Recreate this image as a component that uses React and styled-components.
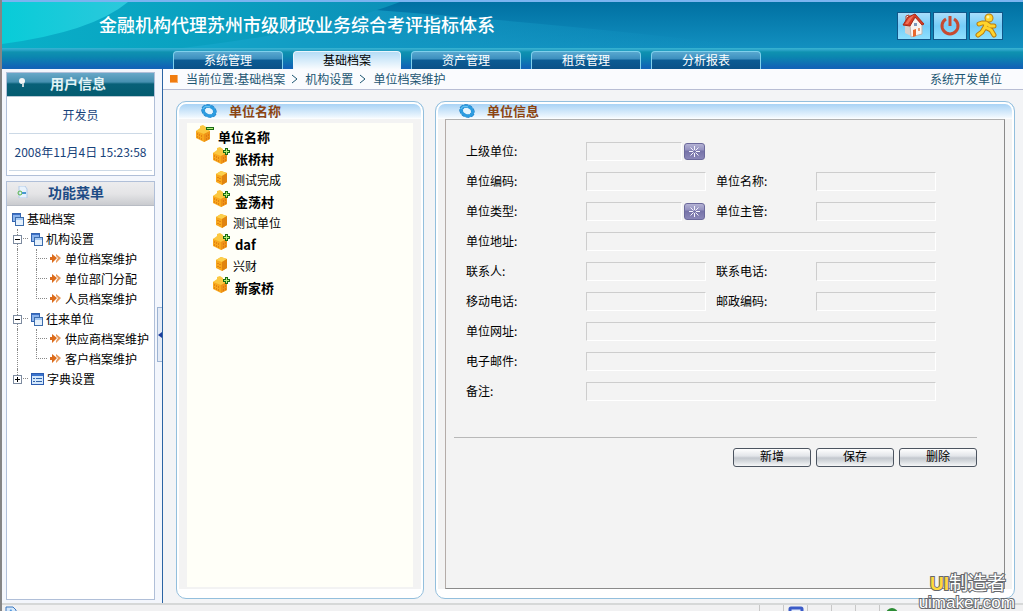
import React, { useState } from "react";
import styled, { createGlobalStyle } from "styled-components";

const GlobalStyle = createGlobalStyle`
    * {
        box-sizing: border-box;
    }

    body {
        margin: 0;
        font-family: "Noto Sans CJK SC", sans-serif;
        font-size: 12px;
        line-height: 20px;
        color: #000;
    }

    a {
        color: inherit;
        text-decoration: none;
    }

    button, input {
        font: inherit;
        color: inherit;
        margin: 0;
        padding: 0;
    }
`;

const Page = styled.div`
    position: relative;
    display: flex;
    flex-direction: column;
    min-height: 100vh;
    overflow: hidden;
    border-left: 2px solid #858585;
    background: #f3f4f6;
`;

/* ---- top ---- */

const Header = styled.header`
    position: relative;
    display: flex;
    align-items: center;
    justify-content: space-between;
    height: 48px;
    padding: 3px 20px 0 97px;
    border-top: 2px solid #7ab4f0;
    background: linear-gradient(#0070a2, #1290c0);
`;

const Swoosh = styled.svg`
    position: absolute;
    left: 0;
    top: 0;
    width: 760px;
    height: 46px;
`;

const Title = styled.h1`
    position: relative;
    margin: 0;
    font-size: 18px;
    line-height: 24px;
    font-weight: 500;
    color: #fff;
    padding-bottom: 6px;
`;

const Tools = styled.div`
    position: relative;
    display: flex;
    gap: 2px;
    padding-bottom: 2px;
`;

const ToolButton = styled.button`
    display: flex;
    align-items: center;
    justify-content: center;
    width: 34px;
    height: 28px;
    border: 1px solid #12578a;
    background: linear-gradient(#a8ddfb, #74cdf8 50%, #8fe0ff);
`;

const TabBar = styled.nav`
    display: flex;
    gap: 10px;
    height: 21px;
    padding: 3px 0 0 171px;
    background: linear-gradient(#38b4d2, #2aa4c8 2px, #0f92b0 4px, #0b86b0 9px, #1164b6 19px, #1164b6);
`;

const Tab = styled.a`
    width: ${props => props.$active ? "108px" : "110px"};
    height: 18px;
    border: 1px solid ${props => props.$active ? "#e9f5fd" : "#7fd0ec"};
    border-bottom: none;
    border-radius: 4px 4px 0 0;
    text-align: center;
    line-height: 15px;
    color: ${props => props.$active ? "#000" : "#fff"};
    background: ${props => props.$active
        ? "linear-gradient(#b4dcf6, #f8fbfe)"
        : "linear-gradient(#58a8d0, #3c8fbe 7px, #0c5c94 8px, #0b5288)"};
`;

/* ---- sidebar ---- */

const Body = styled.div`
    display: flex;
    flex: 1;
`;

const Sidebar = styled.aside`
    position: relative;
    display: flex;
    flex-direction: column;
    gap: 5px;
    width: 161px;
    padding: 3px 7px 3px 4px;
    border-right: 1px solid #2b64a4;
    background: #f3f6fc;
`;

const SideBox = styled.section`
    flex: ${props => props.$grow ? "1" : "none"};
    border: 1px solid #b0bfd8;
    background: #fff;
`;

const SideHead = styled.h2`
    display: flex;
    align-items: center;
    gap: ${props => props.$teal ? "22px" : "20px"};
    margin: 0;
    height: 24px;
    padding: 0 0 3px 10px;
    font-size: 14px;
    line-height: 20px;
    color: ${props => props.$teal ? "#e3f3f6" : "#1d4b85"};
    border-bottom: 1px solid ${props => props.$teal ? "#b8c8d4" : "#b8bcc4"};
    background: ${props => props.$teal
        ? "linear-gradient(#68a8c8, #4690b0 9px, #086078 11px, #045c70)"
        : "linear-gradient(#ececee, #e4e4e6 12px, #c9cbcf)"};
`;

const UserLine = styled.p`
    margin: 0 2px;
    padding: 8px 0;
    text-align: center;
    white-space: nowrap;
    color: #17427a;
    border-bottom: 1px solid #ccd9e6;
`;

const UserInfo = styled.div`
    padding-bottom: 4px;
`;

const Tree = styled.ul`
    list-style: none;
    margin: 0;
    padding: 3px 0 0 5px;
`;

const Branch = styled.div`
    display: flex;
    align-items: center;
    height: 20px;
    white-space: nowrap;
`;

/* one indent step, with the dotted guide lines of the tree */
const Guide = styled.span`
    position: relative;
    flex: none;
    align-self: stretch;
    display: flex;
    align-items: center;
    width: 19px;

    &::before {
        content: "";
        position: absolute;
        left: 5px;
        top: 0;
        height: ${props => props.$last ? "50%" : "100%"};
        border-left: 1px dotted #888;
    }

    &::after {
        content: "";
        position: absolute;
        left: 5px;
        right: 3px;
        top: 9px;
        border-top: ${props => props.$arm ? "1px dotted #888" : "none"};
    }
`;

const Toggle = styled.button`
    position: relative;
    z-index: 1;
    display: flex;
    width: 9px;
    height: 9px;
    margin-left: 1px;
    border: 1px solid #7d8ba0;
    background: #fff;
`;

const BranchLink = styled.a`
    display: flex;
    align-items: center;
    gap: ${props => props.$leaf ? "4px" : "3px"};
`;

const Handle = styled.button`
    position: absolute;
    right: 0;
    top: 238px;
    display: flex;
    align-items: center;
    width: 5px;
    height: 55px;
    border: 1px solid #9db3d2;
    border-right: none;
    background: #e4ebf6;
`;

/* ---- content ---- */

const Content = styled.div`
    display: flex;
    flex-direction: column;
    flex: 1;
    min-width: 0;
`;

const Crumbs = styled.div`
    display: flex;
    align-items: center;
    height: 21px;
    padding: 0 21px 0 7px;
    border-bottom: 1px solid #b8bdd4;
    background: #fafbfe;
    color: #1d5672;
`;

const Square = styled.span`
    width: 8px;
    height: 8px;
    margin-right: 8px;
    background: #f07c10;
    border-right: 1px solid #f8b070;
    border-bottom: 1px solid #f8b070;
`;

const Arrow = styled.span`
    display: flex;
    margin: 0 7px 0 6px;
`;

const Owner = styled.a`
    margin-left: auto;
`;

const Panels = styled.main`
    display: flex;
    flex: 1;
    gap: 11px;
    padding: 11px 8px 4px 13px;
`;

const Panel = styled.section`
    display: flex;
    flex-direction: column;
    flex: ${props => props.$narrow ? "none" : "1"};
    width: ${props => props.$narrow ? "248px" : "auto"};
    padding: 0 ${props => props.$narrow ? "10px" : "9px"} 9px;
    border: 1px solid #93bfdd;
    border-radius: 10px;
    box-shadow: inset 0 0 0 2px #fff;
    background:
        linear-gradient(#fff, #fff) bottom / 100% 9px no-repeat,
        linear-gradient(#fff, #fff 2px, #a9d3f5 2px, #eef7fe 15px, #fff 17px) top / 100% 17px no-repeat,
        #f3f3f3;
`;

const PanelHead = styled.h2`
    display: flex;
    align-items: center;
    gap: 11px;
    height: 17px;
    margin: 0;
    padding-left: 13px;
    font-size: 13px;
    line-height: 17px;
    color: #8c4512;
`;

const UnitTree = styled.ul`
    flex: 1;
    list-style: none;
    margin: 4px 0 2px;
    padding: 0 0 0 8px;
    background: #fffff8;
`;

const Unit = styled.li`
    display: flex;
    align-items: center;
    gap: ${props => props.$leaf ? "5px" : "4px"};
    height: ${props => props.$leaf ? "21px" : "22px"};
    padding-left: ${props => props.$root ? "0" : props.$leaf ? "20px" : "17px"};
    font-size: ${props => props.$leaf ? "12px" : "13px"};
    font-weight: ${props => props.$leaf ? "400" : "700"};

    a {
        padding-top: 5px;
    }
`;

const Frame = styled.form`
    flex: 1;
    padding: 16px 27px 0 8px;
    border: 1px solid #8a8a8a;
    border-top-color: #b0b0b0;
    border-left-color: #b4aca8;
    background: #f3f3f3;
`;

const Fields = styled.div`
    display: grid;
    grid-template-columns: 120px 120px 110px 120px;
    grid-auto-rows: 30px;
    align-items: center;
    padding: 0 0 31px 12px;
    border-bottom: 1px solid #b8b8b8;
`;

const Label = styled.label`
    grid-column: ${props => props.$second ? "3" : "1"};
    padding-left: ${props => props.$second ? "10px" : "0"};
`;

const FieldCell = styled.div`
    display: flex;
    align-items: center;
    gap: 2px;
    grid-column: ${props => props.$wide ? "2 / span 3" : props.$second ? "4" : "2"};
`;

const TextBox = styled.input`
    width: ${props => props.$picker ? "96px" : "100%"};
    height: 19px;
    padding: 0 2px;
    border: 1px solid #fff;
    border-top-color: #cdcdcd;
    border-left-color: #cdcdcd;
    background: #f3f3f3;
    outline: none;
`;

const PickButton = styled.button`
    flex: none;
    display: flex;
    align-items: center;
    justify-content: center;
    width: 21px;
    height: 17px;
    border: 1px solid #6c6a9c;
    border-radius: 3px;
    background: linear-gradient(#b4b2d4, #9491c0 6px, #7673a8 7px, #8a87b8);
`;

const Actions = styled.div`
    display: flex;
    justify-content: flex-end;
    gap: 5px;
    padding-top: 10px;
`;

const ActionButton = styled.button`
    width: 78px;
    height: 19px;
    padding-bottom: 3px;
    line-height: 14px;
    border: 1px solid #4c5460;
    border-radius: 3px;
    background: linear-gradient(#fff, #e2e5e9 7px, #c3c8ce 9px, #d4d8dc 12px, #f6f7f8);
`;

/* ---- bottom ---- */

const StatusBar = styled.footer`
    display: flex;
    align-items: flex-start;
    height: 8px;
    padding: 0 120px 0 2px;
    border-top: 2px solid #d6d8d8;
    background: #f1f1f2;
    overflow: hidden;
`;

const Cells = styled.div`
    display: flex;
    margin-left: auto;
`;

const Cell = styled.span`
    display: flex;
    justify-content: center;
    width: 24px;
    height: 8px;
    padding-top: 1px;
    border-left: 1px solid #c8c8c8;
`;

const Watermark = styled.div`
    position: absolute;
    right: 8px;
    bottom: 0;
    text-align: right;
    color: #fff;
    -webkit-text-stroke: 2px #66686c;
    paint-order: stroke fill;
    pointer-events: none;
`;

const Brand = styled.div`
    padding-right: 9px;
    font-size: 19px;
    line-height: 20px;

    b {
        font-family: "Liberation Sans", sans-serif;
        color: #ffd83c;
    }
`;

const Site = styled.div`
    font-family: "Liberation Sans", sans-serif;
    font-size: 17px;
    line-height: 17px;
`;

const HouseIcon = () => <svg width="28" height="25" viewBox="0 0 28 25">
    <path d="M5 12l6-4v15l-6-3z" fill="#d8d0cc" />
    <path d="M10 12l6-8 6 7v10l-11 3z" fill="#f8f4f0" stroke="#c0b4ac" />
    <path d="M6 3l3-1v6L6 10z" fill="#f6e2dc" stroke="#b04030" />
    <path d="M3 12l5-8 7-3 9 10-2 1-7-8-5 9z" fill="#d83c24" stroke="#a82a18" />
    <path d="M5 11l4-6 5-3-6 9z" fill="#ee7058" />
    <path d="M13 17l3-1v7l-3 1z" fill="#e8682c" />
    <rect x="14" y="10" width="3" height="3" fill="#7c98bc" />
    <rect x="18" y="15" width="2" height="3" fill="#e8a078" />
</svg>;

const PowerIcon = () => <svg width="22" height="22" viewBox="0 0 22 22" fill="none" stroke="#c64a30" strokeWidth="3">
    <path d="M7 4a8 8 0 1 0 8 0" />
    <path d="M11 1v10" />
</svg>;

const RunnerIcon = () => <svg width="24" height="25" viewBox="0 0 24 25" strokeLinecap="round" strokeLinejoin="round" fill="none">
    <g stroke="#b87c10" strokeWidth="5">
        <path d="M12 10l-1 5M11 14l6 3 3 5M11 14l-3 5-4 3M12 10H8l-3 1M12 10l4 3h4" />
        <circle cx="15" cy="5" r="2" />
    </g>
    <g stroke="#ffd42c" strokeWidth="3">
        <path d="M12 10l-1 5M11 14l6 3 3 5M11 14l-3 5-4 3M12 10H8l-3 1M12 10l4 3h4" />
        <circle cx="15" cy="5" r="2" fill="#ffd42c" />
    </g>
    <circle cx="14" cy="4" r="1.500" fill="#fff4a8" />
</svg>;

const PinIcon = () => <svg width="11" height="12" viewBox="0 0 11 12">
    <circle cx="5" cy="4" r="3" fill="#f4f6f6" />
    <path d="M6 6v4" stroke="#c4d4d8" strokeWidth="2" />
</svg>;

const SheetIcon = () => <svg width="11" height="12" viewBox="0 0 11 12">
    <path d="M2 0h6l2 3v9H2z" fill="#e8f2fc" stroke="#b4cce8" />
    <circle cx="3" cy="7" r="2" fill="none" stroke="#58b848" />
    <path d="M5 7h4" stroke="#4898d0" strokeWidth="2" />
</svg>;

const WindowsIcon = () => <svg width="12" height="13" viewBox="0 0 12 13">
    <rect x="0.5" y="0.5" width="8" height="8" fill="#8cb4ec" stroke="#3464b0" />
    <path d="M1 1h7v1H1z" fill="#3c70c8" />
    <rect x="3.5" y="4.5" width="8" height="8" fill="#e4f0fc" stroke="#3c6cac" />
    <path d="M4 5h7v2H4z" fill="#a4c8f4" />
</svg>;

const ListIcon = () => <svg width="13" height="12" viewBox="0 0 13 12">
    <rect x="0.5" y="0.5" width="12" height="11" fill="#d4e8fc" stroke="#2c5cb0" />
    <path d="M1 1h11v2H1z" fill="#3c74cc" />
    <path d="M2 5.5h2M2 8.5h2M5 5.5h6M5 8.5h6" stroke="#3464a8" />
</svg>;

const ArrowsIcon = () => <svg width="11" height="10" viewBox="0 0 11 10" fill="#dc6c1c">
    <path d="M0 3h2V0l5 4-5 5V6H0z" />
    <path d="M6 0l5 4-5 5V7l2-3-2-2z" fill="#e89858" />
</svg>;

const RingIcon = () => <svg width="18" height="15" viewBox="0 0 18 15" fill="none">
    <ellipse cx="9" cy="8" rx="6" ry="4.500" transform="rotate(25 9 8)" stroke="#1878c0" strokeWidth="4" strokeDasharray="3 1" />
    <ellipse cx="9" cy="8" rx="6" ry="4.500" transform="rotate(25 9 8)" stroke="#2c9ce0" strokeWidth="3" />
    <ellipse cx="9" cy="8" rx="4" ry="3" transform="rotate(25 9 8)" fill="#e4f4fe" />
    <path d="M3 6c1-3 4-3 7-2" stroke="#7cccf6" />
</svg>;

const BlockIcon = ({ sign }) => <svg width="19" height="18" viewBox="0 0 19 18">
    <path d="M1 6l8-3 6 3v8l-6 3-8-4z" fill="#f8a81c" />
    <path d="M1 6l4-3V1l3-1 3 2v2l4 2-6 3z" fill="#fcc840" />
    <path d="M9 9l6-3v8l-6 3z" fill="#ee9418" />
    <path d="M2 9h1M4 10h1M6 11h1M2 12h1M4 13h1M6 14h1M11 11h1M13 10h1M11 14h1M13 13h1" stroke="#d0600c" />
    <path d={sign === "-" ? "M11 3.500h8" : "M11 4.500h7M14.500 1v7"} stroke="#1c6c14" strokeWidth="3" />
    <path d={sign === "-" ? "M12 3.500h6" : "M12 4.500h5M14.500 2v5"} stroke="#b8f078" />
</svg>;

const LeafIcon = () => <svg width="13" height="16" viewBox="0 0 13 16">
    <path d="M1 4l5-3 6 2v9l-5 3-6-3z" fill="#f8a81c" />
    <path d="M1 4l5-3 6 2-5 3z" fill="#fcd04c" />
    <path d="M7 6l5-3v9l-5 3z" fill="#e08410" />
    <path d="M3 7v1M5 8v1M3 10v1M5 11v1" stroke="#d0600c" />
</svg>;

const StarIcon = () => <svg width="13" height="13" viewBox="0 0 13 13" stroke="#f4f4fc">
    <path d="M6.500 1v4M6.500 8v4M1 6.500h4M8 6.500h4M2.500 2.500l3 3M10.500 2.500l-3 3M2.500 10.500l3-3M10.500 10.500l-3-3" />
</svg>;

const tabs = ["系统管理", "基础档案", "资产管理", "租赁管理", "分析报表"];

const menu = [
    { name: "机构设置", items: ["单位档案维护", "单位部门分配", "人员档案维护"] },
    { name: "往来单位", items: ["供应商档案维护", "客户档案维护"] },
    { name: "字典设置", items: [] },
];

const units = [
    { name: "单位名称", root: true },
    { name: "张桥村" },
    { name: "测试完成", leaf: true },
    { name: "金荡村" },
    { name: "测试单位", leaf: true },
    { name: "daf" },
    { name: "兴财", leaf: true },
    { name: "新家桥" },
];

const fields = [
    { id: "parent", label: "上级单位:", picker: true },
    { id: "code", label: "单位编码:" },
    { id: "name", label: "单位名称:", second: true },
    { id: "type", label: "单位类型:", picker: true },
    { id: "manager", label: "单位主管:", second: true },
    { id: "address", label: "单位地址:", wide: true },
    { id: "contact", label: "联系人:" },
    { id: "phone", label: "联系电话:", second: true },
    { id: "mobile", label: "移动电话:" },
    { id: "zip", label: "邮政编码:", second: true },
    { id: "site", label: "单位网址:", wide: true },
    { id: "email", label: "电子邮件:", wide: true },
    { id: "remark", label: "备注:", wide: true },
];

function MenuGroup({ group, last }) {
    const [open, setOpen] = useState(group.items.length > 0);

    return <li>
        <Branch>
            <Guide $arm $last={last}>
                <Toggle type="button" aria-label={group.name} aria-expanded={open} onClick={() => setOpen(!open)}>
                    <svg width="7" height="7" viewBox="0 0 7 7" stroke="#000">
                        <path d={open ? "M1 3.500h5" : "M1 3.500h5M3.500 1v5"} />
                    </svg>
                </Toggle>
            </Guide>
            <BranchLink href="#">{group.items.length ? <WindowsIcon /> : <ListIcon />}{group.name}</BranchLink>
        </Branch>
        {open && group.items.map((item, i) => <Branch key={item}>
            <Guide />
            <Guide $arm $last={i === group.items.length - 1} />
            <BranchLink href="#" $leaf><ArrowsIcon />{item}</BranchLink>
        </Branch>)}
    </li>;
}

function Field({ field }) {
    return <>
        <Label htmlFor={field.id} $second={field.second}>{field.label}</Label>
        <FieldCell $second={field.second} $wide={field.wide}>
            <TextBox type="text" id={field.id} $picker={field.picker} />
            {field.picker && <PickButton type="button" aria-label={field.label}><StarIcon /></PickButton>}
        </FieldCell>
    </>;
}

const CrumbArrow = () => <Arrow>
    <svg width="7" height="10" viewBox="0 0 7 10" fill="none" stroke="#1d5672"><path d="M1 1l5 4-5 4" /></svg>
</Arrow>;

export default function App() {
    return <Page>
        <GlobalStyle />
        <Header>
            <Swoosh viewBox="0 0 760 46" preserveAspectRatio="none">
                <defs>
                    <linearGradient id="wide" x1="0" x2="1">
                        <stop offset="0" stopColor="#12b8d0" />
                        <stop offset="0.4" stopColor="#129cc4" />
                        <stop offset="1" stopColor="#1290c0" stopOpacity="0" />
                    </linearGradient>
                    <linearGradient id="mid" x1="0" x2="1">
                        <stop offset="0" stopColor="#08b0c8" />
                        <stop offset="1" stopColor="#0c90b8" />
                    </linearGradient>
                    <linearGradient id="near" x1="0" x2="1">
                        <stop offset="0" stopColor="#08ccd8" />
                        <stop offset="1" stopColor="#2cc8dc" />
                    </linearGradient>
                </defs>
                <path d="M0 0H260Q560 20 760 46H0z" fill="url(#wide)" />
                <path d="M0 0H398Q320 30 180 46H0z" fill="url(#mid)" />
                <path d="M0 0H126Q90 30 0 42z" fill="url(#near)" />
            </Swoosh>
            <Title>金融机构代理苏州市级财政业务综合考评指标体系</Title>
            <Tools>
                <ToolButton aria-label="首页"><HouseIcon /></ToolButton>
                <ToolButton aria-label="退出"><PowerIcon /></ToolButton>
                <ToolButton aria-label="注销"><RunnerIcon /></ToolButton>
            </Tools>
        </Header>
        <TabBar>
            {tabs.map((name, i) => <Tab key={name} href="#" $active={i === 1}>{name}</Tab>)}
        </TabBar>
        <Body>
            <Sidebar>
                <SideBox>
                    <SideHead $teal><PinIcon />用户信息</SideHead>
                    <UserInfo>
                        <UserLine>开发员</UserLine>
                        <UserLine>2008年11月4日 15:23:58</UserLine>
                    </UserInfo>
                </SideBox>
                <SideBox $grow>
                    <SideHead><SheetIcon />功能菜单</SideHead>
                    <Tree>
                        <li><Branch><BranchLink href="#"><WindowsIcon />基础档案</BranchLink></Branch></li>
                        {menu.map((group, i) => <MenuGroup key={group.name} group={group} last={i === menu.length - 1} />)}
                    </Tree>
                </SideBox>
                <Handle type="button" aria-label="收起">
                    <svg width="4" height="6" viewBox="0 0 4 6"><path d="M4 0v6L0 3z" fill="#1c3c9c" /></svg>
                </Handle>
            </Sidebar>
            <Content>
                <Crumbs>
                    <Square />
                    当前位置:<a href="#">基础档案</a>
                    <CrumbArrow />
                    <a href="#">机构设置</a>
                    <CrumbArrow />
                    <a href="#">单位档案维护</a>
                    <Owner href="#">系统开发单位</Owner>
                </Crumbs>
                <Panels>
                    <Panel $narrow>
                        <PanelHead><RingIcon />单位名称</PanelHead>
                        <UnitTree>
                            {units.map(unit => <Unit key={unit.name} $root={unit.root} $leaf={unit.leaf}>
                                {unit.leaf ? <LeafIcon /> : <BlockIcon sign={unit.root ? "-" : "+"} />}
                                <a href="#">{unit.name}</a>
                            </Unit>)}
                        </UnitTree>
                    </Panel>
                    <Panel>
                        <PanelHead><RingIcon />单位信息</PanelHead>
                        <Frame onSubmit={e => e.preventDefault()}>
                            <Fields>
                                {fields.map(field => <Field key={field.id} field={field} />)}
                            </Fields>
                            <Actions>
                                <ActionButton type="button">新增</ActionButton>
                                <ActionButton type="submit">保存</ActionButton>
                                <ActionButton type="button">删除</ActionButton>
                            </Actions>
                        </Frame>
                    </Panel>
                </Panels>
            </Content>
        </Body>
        <StatusBar>
            <svg width="14" height="8" viewBox="0 0 14 8">
                <path d="M2 8V2h7l3 3v3" fill="#d4e8fc" stroke="#3c78c0" />
                <path d="M4 8l3-4 2 4" fill="#4c94dc" />
            </svg>
            <Cells>
                <Cell />
                <Cell><svg width="16" height="8" viewBox="0 0 16 8"><rect x="2" y="2" width="12" height="10" rx="1" fill="#e4ecfc" stroke="#3c5cc8" strokeWidth="3" /></svg></Cell>
                <Cell />
                <Cell />
                <Cell />
                <Cell><svg width="14" height="8" viewBox="0 0 14 8"><circle cx="7" cy="8" r="6" fill="#2c8c34" /></svg></Cell>
            </Cells>
        </StatusBar>
        <Watermark>
            <Brand><b>UI</b>制造者</Brand>
            <Site>uimaker.com</Site>
        </Watermark>
    </Page>;
}
